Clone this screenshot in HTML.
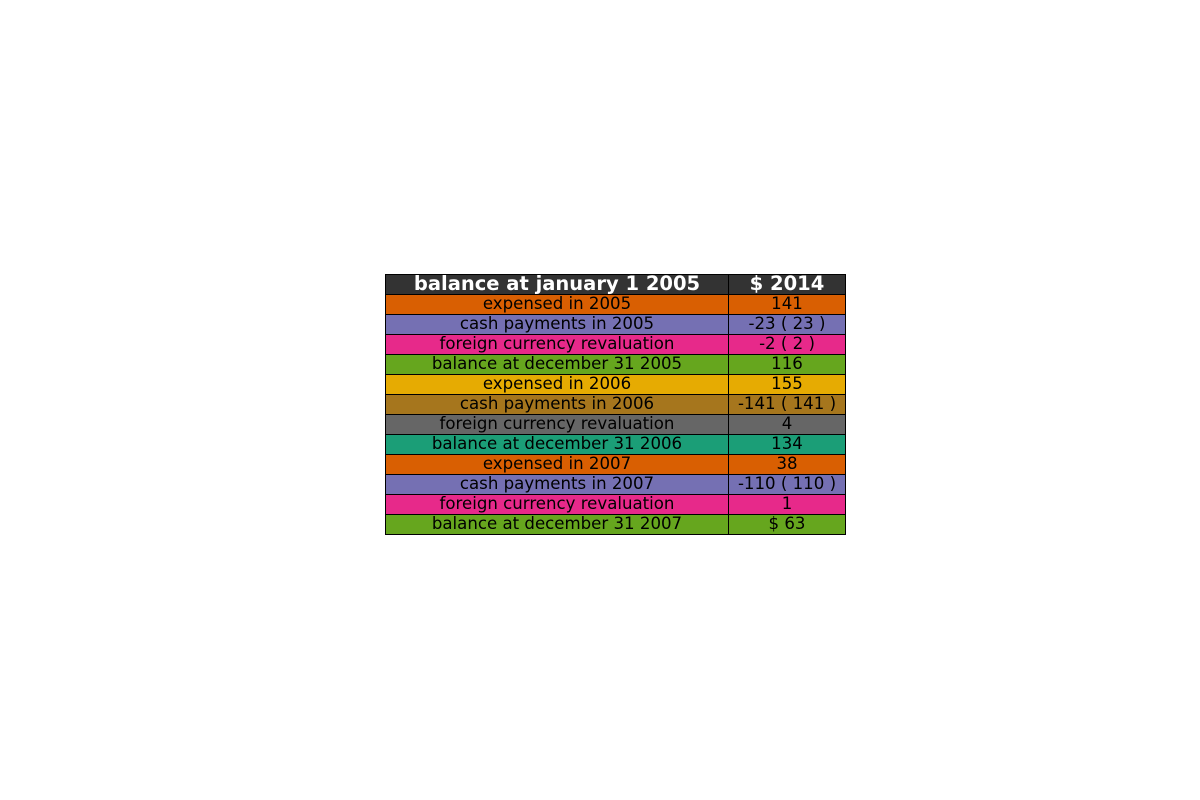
<!DOCTYPE html>
<html><head><style>
body{margin:0;width:1200px;height:800px;background:#fff;position:relative;font-family:"DejaVu Sans","Liberation Sans",sans-serif;}
.c{position:absolute;box-sizing:border-box;border:1px solid #000;height:21px;line-height:17px;text-align:center;font-size:16.6px;color:#000;white-space:nowrap;overflow:hidden}
.h{font-weight:bold;color:#fff;font-size:19.5px;line-height:18px;background:#333}
</style></head><body>
<div id="t"></div>
<script>
var rows=[["balance at january 1 2005","$ 2014","#333333"],
["expensed in 2005","141","#d95f02"],
["cash payments in 2005","-23 ( 23 )","#7570b3"],
["foreign currency revaluation","-2 ( 2 )","#e7298a"],
["balance at december 31 2005","116","#66a61e"],
["expensed in 2006","155","#e6ab02"],
["cash payments in 2006","-141 ( 141 )","#a6761d"],
["foreign currency revaluation","4","#666666"],
["balance at december 31 2006","134","#1b9e77"],
["expensed in 2007","38","#d95f02"],
["cash payments in 2007","-110 ( 110 )","#7570b3"],
["foreign currency revaluation","1","#e7298a"],
["balance at december 31 2007","$ 63","#66a61e"]];
var h="";
rows.forEach(function(r,i){
 var y=274+i*20, cls=i==0?"c h":"c";
 h+='<div class="'+cls+'" style="left:385px;top:'+y+'px;width:344px;background:'+r[2]+'">'+r[0]+'</div>';
 h+='<div class="'+cls+'" style="left:728px;top:'+y+'px;width:118px;background:'+r[2]+'">'+r[1]+'</div>';
});
document.getElementById("t").innerHTML=h;
</script>
</body></html>
